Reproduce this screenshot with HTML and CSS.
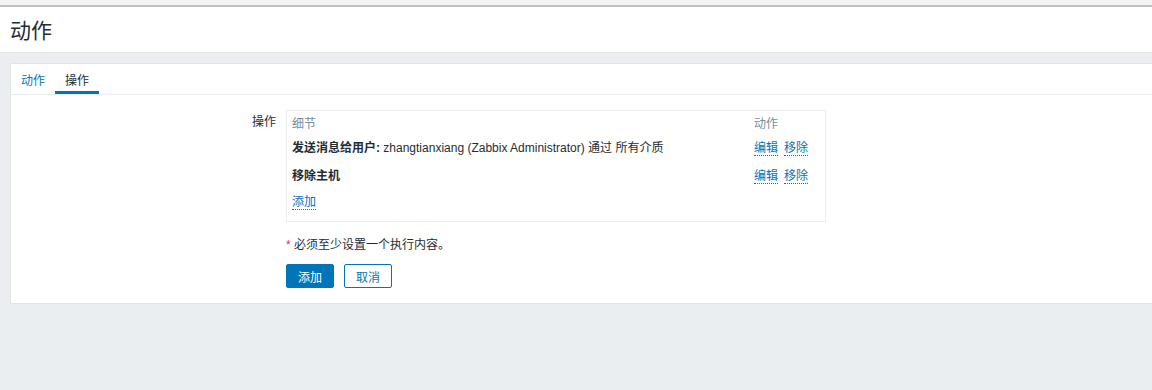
FILE: index.html
```html
<!DOCTYPE html>
<html lang="zh">
<head>
  <meta charset="UTF-8">
  <title>动作</title>
  <link rel="stylesheet" href="styles.css">
</head>
<body>
  <div class="topbar"></div>
  <div class="header">
    <h1>动作</h1>
  </div>
  <div class="wrapper">
    <div class="container">
      <!-- Pestañas -->
      <ul class="tabs">
        <li><a href="#">动作</a></li>
        <li class="active"><a href="#">操作</a></li>
      </ul>
      <div class="form">
        <div class="form-row">
          <label class="form-label">操作</label>
          <div class="form-field">
            <div class="op-table">
              <div class="op-row op-head">
                <div class="col-detail">细节</div>
                <div class="col-action">动作</div>
              </div>
              <div class="op-row op-first">
                <div class="col-detail"><b>发送消息给用户:</b> zhangtianxiang (Zabbix Administrator) 通过 所有介质</div>
                <div class="col-action"><a class="link" href="#">编辑</a><a class="link" href="#">移除</a></div>
              </div>
              <div class="op-row op-second">
                <div class="col-detail"><b>移除主机</b></div>
                <div class="col-action"><a class="link" href="#">编辑</a><a class="link" href="#">移除</a></div>
              </div>
              <div class="op-row op-add">
                <div class="col-detail"><a class="link" href="#">添加</a></div>
              </div>
            </div>
          </div>
        </div>
        <div class="form-row note-row">
          <div class="form-label"></div>
          <div class="form-field note"><span class="asterisk">*</span> 必须至少设置一个执行内容。</div>
        </div>
        <div class="form-row buttons-row">
          <div class="form-label"></div>
          <div class="form-field buttons">
            <button class="btn-primary" type="button">添加</button>
            <button class="btn-alt" type="button">取消</button>
          </div>
        </div>
      </div>
    </div>
  </div>
</body>
</html>
```

FILE: styles.css
```css
/* Estilos básicos */
body {
  font-family: 'Liberation Sans', Arial, 'Noto Sans CJK SC', sans-serif;
  font-size: 12px;
  color: #1f2c33;
  margin: 0;
  padding: 0;
  background-color: #ebeef0;
  height: 390px;
  overflow: hidden;
}
a {
  color: #0275b8;
  text-decoration: none;
}
.topbar {
  height: 5px;
  background-color: #f3f3f3;
  border-bottom: 2px solid #bfbfbf;
}
.header {
  background-color: #fff;
  height: 45px;
  border-bottom: 1px solid #dfe4e7;
  display: flex;
  align-items: center;
  padding-left: 10px;
}
.header h1 {
  margin: 0;
  font-size: 21px;
  font-weight: normal;
  color: #1f2c33;
  line-height: 1;
  position: relative;
  top: 1px;
}
.wrapper {
  padding: 10px 0 0 10px;
}
.container {
  background-color: #fff;
  border: 1px solid #dfe4e7;
  border-right: none;
  height: 239px;
}
/* Tabs */
.tabs {
  list-style: none;
  margin: 0;
  padding: 0;
  display: flex;
  height: 30px;
  border-bottom: 1px solid #ebeef0;
}
.tabs li {
  height: 30px;
  box-sizing: border-box;
  padding: 0 10px;
  display: flex;
  align-items: center;
}
.tabs li.active {
  border-bottom: 3px solid #0275b8;
  padding-top: 3px;
}
.tabs li.active a {
  color: #1f2c33;
}
/* Form */
.form {
  padding-top: 15px;
}
.form-row {
  display: flex;
}
.form-label {
  width: 265px;
  text-align: right;
  padding-right: 10px;
  line-height: 24px;
}
.form-field {
  flex: 0 0 auto;
}
.op-table {
  width: 538px;
  border: 1px solid #ebeef0;
  padding-bottom: 11px;
}
.op-row {
  display: flex;
  align-items: center;
}
.op-head {
  height: 23px;
  color: #768d99;
}
.op-first {
  height: 24px;
}
.op-second {
  height: 32px;
}
.op-add {
  height: 20px;
}
.col-detail {
  flex: 1;
  padding-left: 5px;
}
.col-action {
  width: 71px;
  white-space: nowrap;
}
.link {
  border-bottom: 1px dotted #0275b8;
  margin-right: 6px;
}
.note-row {
  margin-top: 12px;
}
.note {
  line-height: 22px;
}
.asterisk {
  color: #e33734;
}
.buttons-row {
  margin-top: 8px;
}
.buttons {
  display: flex;
  gap: 10px;
}
.buttons button {
  font-family: inherit;
  font-size: 12px;
  height: 24px;
  width: 48px;
  padding: 0;
  border-radius: 2px;
  cursor: pointer;
}
.btn-primary {
  background-color: #0275b8;
  border: 1px solid #0275b8;
  color: #fff;
}
.btn-alt {
  background-color: #fff;
  border: 1px solid #0275b8;
  color: #0275b8;
}
```
